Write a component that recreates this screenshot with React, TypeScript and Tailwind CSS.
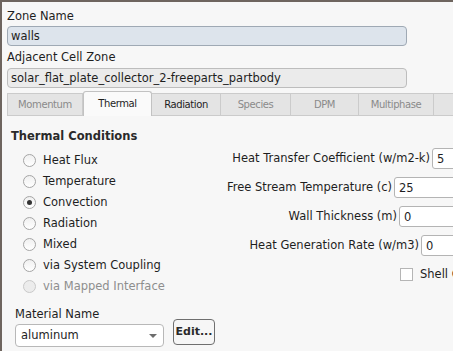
const tabs = [
  { label: 'Momentum', w: 'w-[76px]', state: 'off' },
  { label: 'Thermal', w: 'w-[69px]', state: 'active' },
  { label: 'Radiation', w: 'w-[69px]', state: 'on' },
  { label: 'Species', w: 'w-[70px]', state: 'off' },
  { label: 'DPM', w: 'w-[68px]', state: 'off' },
  { label: 'Multiphase', w: 'w-[75px]', state: 'off' },
  { label: '', w: 'w-[30px]', state: 'off' },
]

const conditions = [
  { label: 'Heat Flux' },
  { label: 'Temperature' },
  { label: 'Convection', checked: true },
  { label: 'Radiation' },
  { label: 'Mixed' },
  { label: 'via System Coupling' },
  { label: 'via Mapped Interface', disabled: true },
]

function Radio({ checked, disabled }: { checked?: boolean; disabled?: boolean }) {
  return (
    <span
      className={`flex h-[13px] w-[13px] shrink-0 items-center justify-center rounded-full border ${
        disabled ? 'border-[#c9c9c9] bg-[#ececec]' : 'border-[#a5a5a5] bg-gradient-to-b from-[#f0f0f0] to-white'
      }`}
    >
      {checked && <span className="h-[5px] w-[5px] rounded-full bg-[#333]" />}
    </span>
  )
}

function Field({ label, labelW, value }: { label: string; labelW: string; value: string }) {
  return (
    <div className="flex h-[29px] items-center">
      <div className={`${labelW} shrink-0 whitespace-nowrap text-right`}>{label}</div>
      <div className="ml-[2px] h-[21px] w-[70px] shrink-0 rounded-[3px] border border-[#b4b4b4] bg-white px-[4px] leading-[20px]">
        {value}
      </div>
    </div>
  )
}

export default function App() {
  return (
    <div className="h-[351px] w-[453px] overflow-hidden border-l-2 border-t-2 border-[#6e655f] bg-[#f7f7f7] font-['DejaVu_Sans',sans-serif] text-[11.5px] text-[#1e1e1e]">
      {/* Zone header */}
      <div className="pl-[5px] pt-[4px]">
        <div className="h-[20px] leading-[20px]">Zone Name</div>
        <div className="h-[20px] w-[400px] rounded-[4px] border border-[#9fa9b4] bg-[#dde4ec] px-[3px] leading-[18px]">
          walls
        </div>
        <div className="h-[22px] leading-[22px]">Adjacent Cell Zone</div>
        <div className="h-[20px] w-[400px] rounded-[4px] border border-[#bdbdbd] bg-[#ebebeb] px-[3px] leading-[18px]">
          solar_flat_plate_collector_2-freeparts_partbody
        </div>

        {/* Tabs */}
        <div className="mt-[3px] flex h-[25px] items-end">
          {tabs.map((tab, i) => (
            <div
              key={i}
              className={`${tab.w} shrink-0 text-center tracking-[-0.4px] text-[10px] ${
                tab.state === 'active'
                  ? 'h-[25px] rounded-t-[3px] border-x border-t border-[#c2c2c2] bg-[#fafafa] leading-[23px] text-[#1e1e1e]'
                  : tab.state === 'on'
                    ? 'h-[23px] border-b border-r border-t border-[#cbcbcb] bg-[#e4e4e4] leading-[21px] text-[#1e1e1e]'
                    : `h-[23px] border-b border-r border-t border-[#cbcbcb] bg-[#e4e4e4] leading-[21px] text-[#8a8a8a] ${i === 0 ? 'border-l' : ''}`
              }`}
            >
              {tab.label}
            </div>
          ))}
        </div>
      </div>

      {/* Thermal panel */}
      <div className="flex pl-[9px]">
        <div className="w-[210px] shrink-0">
          <div className="mt-[10px] h-[20px] text-[11.5px] font-bold leading-[20px] text-[#2a2a2a]">Thermal Conditions</div>
          <div className="mt-[4px] pl-[12px]">
            {conditions.map((c) => (
              <div key={c.label} className="flex h-[21px] items-center gap-[7px]">
                <Radio checked={c.checked} disabled={c.disabled} />
                <span className={c.disabled ? 'text-[#8e8e8e]' : ''}>{c.label}</span>
              </div>
            ))}
          </div>

          <div className="ml-[4px] mt-[7px] h-[20px] leading-[20px]">Material Name</div>
          <div className="ml-[4px] flex items-start gap-[9px]">
            <div className="flex h-[23px] w-[149px] items-center justify-between rounded-[4px] border border-[#b8b8b8] bg-white pl-[5px] pr-[6px]">
              <span>aluminum</span>
              <span className="h-0 w-0 border-x-[4px] border-t-[4px] border-x-transparent border-t-[#6d6d6d]" />
            </div>
            <button className="-mt-[5px] h-[26px] w-[42px] rounded-[4px] border border-[#6f6f6f] bg-[#f6f6f6] text-[11px] font-bold text-[#2a2a2a]">
              Edit...
            </button>
          </div>
        </div>

        <div className="pt-[28px]">
          <Field label="Heat Transfer Coefficient (w/m2-k)" labelW="w-[209px]" value="5" />
          <Field label="Free Stream Temperature (c)" labelW="w-[171px]" value="25" />
          <Field label="Wall Thickness (m)" labelW="w-[176px]" value="0" />
          <Field label="Heat Generation Rate (w/m3)" labelW="w-[198px]" value="0" />
          <div className="flex h-[29px] items-center pl-[179px]">
            <span className="h-[13px] w-[13px] shrink-0 border border-[#b5b5b5] bg-white" />
            <span className="ml-[7px] whitespace-nowrap">Shell Conduction</span>
          </div>
        </div>
      </div>
    </div>
  )
}
